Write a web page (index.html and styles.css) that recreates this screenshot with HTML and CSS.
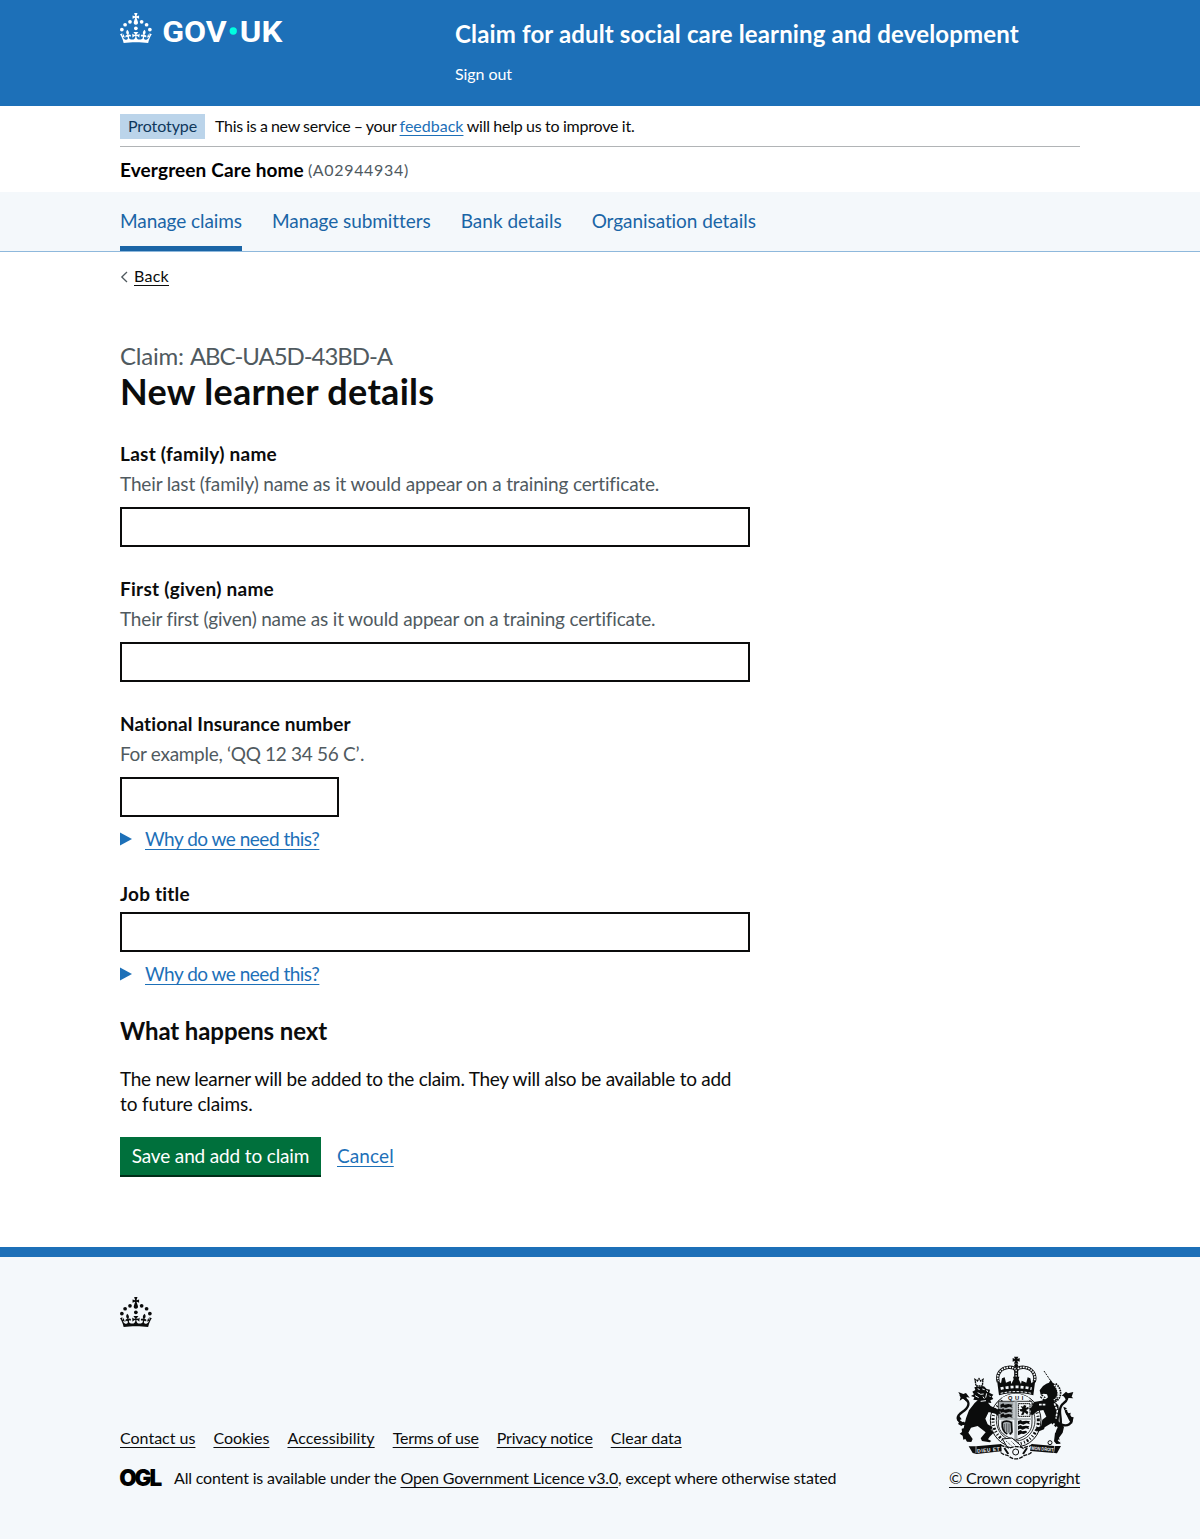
FILE: index.html
```html
<!DOCTYPE html>
<html lang="en">
<head>
<meta charset="utf-8">
<title>New learner details</title>
<link rel="stylesheet" href="styles.css">
</head>
<body>
<svg class="defs" width="0" height="0" aria-hidden="true">
  <defs>
    <g id="crown">
      <circle cx="20" cy="17.6" r="3.7"/><circle cx="10.2" cy="23.5" r="3.7"/><circle cx="3.7" cy="33.2" r="3.7"/><circle cx="31.7" cy="30.6" r="3.7"/><circle cx="43.3" cy="17.6" r="3.7"/><circle cx="53.2" cy="23.5" r="3.7"/><circle cx="59.7" cy="33.2" r="3.7"/>
      <path d="M33.1,9.8c.2-.1.3-.3.5-.5l4.6,2.4v-6.8l-4.6,1.5c-.1-.2-.3-.3-.5-.5l1.9-5.9h-6.7l1.9,5.9c-.2.1-.3.3-.5.5l-4.6-1.5v6.8l4.6-2.4c.1.2.3.3.5.5l-2.6,8c-.9,2.8,1.2,5.7,4.1,5.7h0c3,0,5.1-2.9,4.1-5.7l-2.6-8ZM37,37.9s-3.4,3.8-4.1,6.1c2.2,0,4.2-.5,6.4-2.8l-.7,8.5c-2-2.8-4.4-4.1-5.7-3.8.1,3.1.5,6.7,5.8,7.2,3.7.3,6.7-1.5,7-3.8.4-2.6-2-4.3-3.7-1.6-1.4-4.5,2.4-6.1,4.9-3.2-1.9-4.5-1.8-7.7,2.4-10.9,3,4,2.6,7.3-1.2,11.1,2.4-1.3,6.2,0,4,4.6-1.2-2.8-3.7-2.2-4.2.2-.3,1.7.7,3.7,3,4.2,1.9.3,4.7-.9,7-5.9-1.3,0-2.4.7-3.9,1.7l2.4-8c.6,2.3,1.4,3.7,2.2,4.5.6-1.6.5-2.8,0-5.3l5,1.8c-2.6,3.6-5.2,8.7-7.3,17.5-7.4-1.1-15.7-1.7-24.5-1.7h0c-8.8,0-17.1.6-24.5,1.7-2.1-8.9-4.7-13.9-7.3-17.5l5-1.8c-.5,2.5-.6,3.7,0,5.3.8-.8,1.6-2.3,2.2-4.5l2.4,8c-1.5-1-2.6-1.7-3.9-1.7,2.3,5,5.2,6.2,7,5.9,2.3-.4,3.3-2.4,3-4.2-.5-2.4-3-3.1-4.2-.2-2.2-4.6,1.6-6,4-4.6-3.7-3.7-4.2-7.1-1.2-11.1,4.2,3.2,4.3,6.4,2.4,10.9,2.5-2.8,6.3-1.3,4.9,3.2-1.8-2.7-4.1-1-3.7,1.6.3,2.3,3.3,4.1,7,3.8,5.4-.5,5.7-4.2,5.8-7.2-1.3-.2-3.7,1-5.7,3.8l-.7-8.5c2.2,2.3,4.2,2.7,6.4,2.8-.7-2.3-4.1-6.1-4.1-6.1h10.6Z"/>
    </g>
  </defs>
</svg>

<header class="header">
  <div class="container header-row">
    <div class="header-logo">
      <svg width="164" height="30" viewBox="0 0 328 60" fill="#fff" aria-label="GOV.UK">
        <use href="#crown"/>
        <text class="logo-text" x="84.500" y="57.500" textLength="129" lengthAdjust="spacingAndGlyphs">GOV</text>
        <circle class="logo-dot" cx="226.500" cy="36" r="7.300"/>
        <text class="logo-text" x="239.500" y="57.500" textLength="85" lengthAdjust="spacingAndGlyphs">UK</text>
      </svg>
    </div>
    <div class="header-content">
      <a class="service-name" href="#">Claim for adult social care learning and development</a>
      <a class="sign-out" href="#">Sign out</a>
    </div>
  </div>
</header>

<div class="container">
  <div class="phase">
    <strong class="tag">Prototype</strong>
    <span class="phase-text"><span class="phase-lead">This is a new service – your </span><a class="link feedback" href="#">feedback</a> will help us to improve it.</span>
  </div>
  <div class="org"><strong class="org-name">Evergreen Care home</strong><span class="org-code">(A02944934)</span></div>
</div>

<nav class="nav">
  <ul class="container nav-list">
    <li class="nav-item current"><a href="#">Manage claims</a></li>
    <li class="nav-item"><a href="#">Manage submitters</a></li>
    <li class="nav-item bank"><a href="#">Bank details</a></li>
    <li class="nav-item"><a href="#">Organisation details</a></li>
  </ul>
</nav>

<div class="container page">
  <a class="back" href="#"><svg class="chevron" width="8" height="12" viewBox="0 0 8 12"><path d="M7 1 1.800 6 7 11" fill="none" stroke="#505a5f" stroke-width="1.300"/></svg><span>Back</span></a>
  <main class="main">
    <span class="caption">Claim: <span class="reference">ABC-UA5D-43BD-A</span></span>
    <h1 class="title">New learner details</h1>
    <div class="group">
      <label class="label short" for="last">Last (family) name</label>
      <div class="hint">Their last (family) name as it would appear on a training certificate.</div>
      <input class="input" id="last" type="text">
    </div>
    <div class="group">
      <label class="label short" for="first">First (given) name</label>
      <div class="hint given">Their first (given) name as it would appear on a training certificate.</div>
      <input class="input" id="first" type="text">
    </div>
    <div class="group">
      <label class="label" for="nino">National Insurance number</label>
      <div class="hint example">For example, ‘QQ 12 34 56 C<span class="quote">’</span>.</div>
      <input class="input input-10" id="nino" type="text">
      <div class="details"><svg class="arrow" width="12" height="14" viewBox="0 0 12 14"><path d="M0 .5 12 7 0 13.500z"/></svg><a class="link why" href="#">Why do we need this?</a></div>
    </div>
    <div class="group">
      <label class="label job" for="job">Job title</label>
      <input class="input" id="job" type="text">
      <div class="details"><svg class="arrow" width="12" height="14" viewBox="0 0 12 14"><path d="M0 .5 12 7 0 13.500z"/></svg><a class="link why" href="#">Why do we need this?</a></div>
    </div>
    <h2 class="subtitle">What happens next</h2>
    <p class="body">The new learner will be added to the claim. They will also be available to add<br><span class="body-end">to future claims.</span></p>
    <div class="buttons">
      <button class="button" type="button">Save and add to claim</button>
      <a class="link cancel" href="#">Cancel</a>
    </div>
  </main>
</div>

<footer class="footer">
  <div class="container">
    <svg class="footer-crown" width="32" height="30" viewBox="0 0 64 60" fill="#0b0c0c"><use href="#crown"/></svg>
    <div class="footer-row">
      <div class="footer-meta">
        <ul class="footer-links">
          <li><a href="#">Contact us</a></li>
          <li><a href="#">Cookies</a></li>
          <li class="wide"><a href="#">Accessibility</a></li>
          <li class="tight"><a href="#">Terms of use</a></li>
          <li class="privacy"><a href="#">Privacy notice</a></li>
          <li><a href="#">Clear data</a></li>
        </ul>
        <div class="licence">
          <svg class="ogl" width="42" height="18" viewBox="0 0 42 18" aria-label="OGL"><text class="ogl-text" x="-0.800" y="17">O</text><text class="ogl-text" x="14.500" y="17">G</text><text class="ogl-text" x="29.500" y="17">L</text></svg>
          <span class="licence-text">All content is available under the <a href="#">Open Government Licence v3.0</a>, except where otherwise stated</span>
        </div>
      </div>
      <div class="copyright">
        <svg class="arms" width="118" height="103" viewBox="50 34 354 309" fill="#0b0c0c">
          <!-- crown -->
          <path d="M221 36h13l-3 7 7-3v11l-7-3 3 9h-13l3-9-7 3V40l7 3z"/>
          <circle cx="227.500" cy="63" r="6"/>
          <path d="M174 112c-8-24 8-42 30-44 12-1 20 3 23.500 10 3.500-7 12-11 24-10 22 2 38 20 30 44" fill="none" stroke="#0b0c0c" stroke-width="10"/>
          <path d="M174 112c-8-24 8-42 30-44 12-1 20 3 23.500 10 3.500-7 12-11 24-10 22 2 38 20 30 44" fill="none" stroke="#f4f8fb" stroke-width="5" stroke-dasharray="5 3"/>
          <path d="M227.500 74v30" stroke="#0b0c0c" stroke-width="12"/>
          <path d="M227.500 76v26" stroke="#f4f8fb" stroke-width="4" stroke-dasharray="4 4"/>
          <path d="m170 106 12 10 3-15 8-3 4 16 14-6 2 10 7-14-2-8h19l-2 8 7 14 2-10 14 6 4-16 8 3 3 15 12-10-6 46c-32-9-71-9-103 0z"/>
          <path d="M181 132c30-7 63-7 93 0" fill="none" stroke="#f4f8fb" stroke-width="8" stroke-dasharray="9 6"/>
          <path d="M181 146c30-7 63-7 93 0" fill="none" stroke="#f4f8fb" stroke-width="3" stroke-dasharray="8 4"/>
          <!-- garter and shield -->
          <ellipse cx="226" cy="227" rx="76" ry="80" fill="#f4f8fb" stroke="#0b0c0c" stroke-width="3"/>
          <ellipse cx="226" cy="227" rx="68" ry="71" fill="none" stroke="#0b0c0c" stroke-width="9" stroke-dasharray="3 5 6 6 3 7"/>
          <ellipse cx="226" cy="227" rx="58" ry="62" fill="#f4f8fb" stroke="#0b0c0c" stroke-width="2.500"/>
          <path d="M190 168c23-14 49-14 72 0" fill="none" stroke="#f4f8fb" stroke-width="20"/>
          <path d="M174 170h101v65c0 28-21 42-50 51-30-9-51-23-51-51z" fill="#f4f8fb" stroke="#0b0c0c" stroke-width="2.500"/>
          <path d="M176 172h44v50h-44z" fill="#a4aaad"/>
          <path d="m180 180 9-4 3 4 12-2 13 2-4 4 4 5-10-3-10 4-9-3-7 3zM180 195l9-4 3 4 12-2 13 2-4 4 4 5-10-3-10 4-9-3-7 3zM180 210l9-4 3 4 12-2 13 2-4 4 4 5-10-3-10 4-9-3-7 3z"/>
          <path d="M234 177h35v38h-35z" fill="none" stroke="#0b0c0c" stroke-width="3" stroke-dasharray="5 1"/>
          <path d="m241 184 7 2 3-5 7 2-2 7 8-4 1 7-8 3 7 6-3 8-8-7-4 8-7-1 5-9-7-1-3-6 9-1z"/>
          <path d="M182 228h35l-1 42c-20-5-33-18-34-42z" fill="#a4aaad"/>
          <path d="M186 234c5-6 20-6 27 0l2 28-7 7M186 234c-2 16 3 28 15 34" fill="none" stroke="#0b0c0c" stroke-width="5"/>
          <path d="M192 238v20M199 236v27M206 237v27" stroke="#0b0c0c" stroke-width="1.500"/>
          <path d="m233 229 9-3 3 4 12-2 12 2-3 4 3 5-10-3-10 4-9-3-7 3zM233 244l9-3 3 4 12-2 10 2-3 4 3 5-10-3-10 4-8-3-6 3zM233 259l9-3 3 4 12-2 4 5-10 5-8-1-10 5z"/>
          <path d="M222 170h9v113h-9zM174 221h101v4H174z" fill="#a4aaad"/>
          <path d="m186 283 29-3 28 24-13 10-30-8z" fill="#f4f8fb" stroke="#0b0c0c" stroke-width="3"/>
          <path d="m198 290 15 13M214 291l12 12" stroke="#0b0c0c" stroke-width="3" stroke-dasharray="3 3"/>
          <text class="motto" x="203" y="167" textLength="46">QUI</text>
          <!-- lion -->
          <path d="m104 104 7 5 5-7 5 7 7-5-2 20h-19z" fill="none" stroke="#0b0c0c" stroke-width="4" stroke-dasharray="6 1.500"/>
          <path d="m106 127 25-2 8 8 10 2-2 9 12 6-5 6 5 7-9 4 3 8-10-1 8 10 20 10 9-2 4 7-7 2 5 7-8-1-2 6-7-6-20-5-10 20 7 17 15 9-6 6 9 10-12 12-5 8 10 5-5 4-23-4-4-8 15-18-24-19-20 5-8 15 13 19-4 9-13-1-5-8-6 2-2-12-9-6 7-5-1-10 6-1 7-30 9-24 17-22 9-8-13-2 3-7-10-4 9-5-5-8 9-5-3-8z"/>
          <path d="m112 132 6 3M126 133l7 2M112 144l9 5 9-1M139 146l-3 13M104 153l11 6M121 170l16-2M139 136l3 6M147 153l4 4M128 156l4 6" stroke="#f4f8fb" stroke-width="3"/>
          <path d="M74 239c-31-11-25-25-8-37 20-14 23-27 12-37-6-6-14-7-18-14M73 233l-10 7-8-5" fill="none" stroke="#0b0c0c" stroke-width="7"/>
          <path d="m54 142 15 6 8-3 11 14-9-2-2 13-8-9-11 7 3-12zM53 208l-2 20 13-4z"/>
          <!-- unicorn -->
          <path d="m311 79 21 31" stroke="#0b0c0c" stroke-width="3" stroke-dasharray="6 3"/>
          <path d="m298 137 10-13 10-7 8-3 5-9 6 9 8 5 4 14 5 16-3 16-14 9-18 3-6-10 10-9-3-9-10-2-9 3z"/>
          <path d="M346 117c12 9 17 23 14 35-2 9-8 15-16 19" fill="none" stroke="#0b0c0c" stroke-width="5" stroke-dasharray="5 2.500"/>
          <path d="M341 121c10 9 14 20 11 31-2 7-6 11-12 14" fill="none" stroke="#f4f8fb" stroke-width="3.500" stroke-dasharray="5 2"/>
          <path d="M300 156c10 12 24 16 41 13M303 150l12 9" fill="none" stroke="#0b0c0c" stroke-width="4" stroke-dasharray="7 3"/>
          <path d="m281 172 22-4 17-6 20 6 14 14 3 22-2 26 16 17-4 17-11 15 5 18-13 1-7-8 3-25 6-14-17-15-20 12-2 6-15 6-13-3 4-6 15-6 4-20 12-9-9-20-17 3-15 12-8-2 3-10-6-7 8-4z"/>
          <path d="M296 180h19M342 176l9 22-4 24M342 236l-12 24-3 27M350 246l-7 17M354 285l8 10" fill="none" stroke="#f4f8fb" stroke-width="5" stroke-dasharray="8 3"/>
          <circle cx="329" cy="294" r="6" fill="none" stroke="#0b0c0c" stroke-width="3"/>
          <path d="M360 246c6-23-6-41 1-59 5-14 16-12 19-24l-7-10M363 239c19 9 35-4 29-18-4-11-18-14-15-26" fill="none" stroke="#0b0c0c" stroke-width="7"/>
          <path d="m364 153 13-12 6 5 16-4-5 14 5 5-14-1-7 8-3-12zM377 208l14-4-2 12 11 2-5 20-8-10zM369 186l11 5-8 6z"/>
          <!-- compartment and motto scroll -->
          <path d="M181 301c10 7 18 3 25 10 14-7 30-7 43 0 7-7 15-3 25-10l-2 23c-9 9-19 4-25 12-14 9-28 9-40 0-6-8-17-3-25-12z" fill="#f4f8fb" stroke="#0b0c0c" stroke-width="4" stroke-dasharray="12 3"/>
          <path d="m192 310 12 18M260 310l-12 18" stroke="#0b0c0c" stroke-width="6"/>
          <circle cx="226" cy="322" r="9" fill="none" stroke="#0b0c0c" stroke-width="3"/>
          <path d="m85 305 22 0 76-7-1 22-73 8-12-3zM274 298l69 6 19 0-12 22-80-7z"/>
          <path d="M107 305v20M343 304l-3 20" stroke="#f4f8fb" stroke-width="2"/>
          <text class="motto scroll" transform="rotate(-5 111 324)" x="111" y="324" textLength="68">DIEU ET</text>
          <text class="motto scroll" transform="rotate(5 273 316)" x="273" y="315" textLength="66" lengthAdjust="spacingAndGlyphs">MON DROIT</text>
        </svg>
        <a class="crown-link" href="#">© Crown copyright</a>
      </div>
    </div>
  </div>
</footer>
</body>
</html>
```

FILE: styles.css
```css
* { box-sizing: border-box; }
body {
  margin: 0;
  background: #fff;
  color: #0b0c0c;
  font: 400 19px/25px Lato, "Noto Sans", sans-serif;
  font-variant-ligatures: none;
}
a { color: inherit; }
ul { list-style: none; margin: 0; padding: 0; }
svg { overflow: visible; }
.defs { display: block; }
.container { width: 960px; margin: 0 auto; }
a, .back span {
  text-decoration-thickness: 1px;
  text-underline-offset: 3px;
  text-decoration-skip-ink: none;
}

/* Header */
.header { background: #1d70b8; color: #fff; height: 106px; }
.header-row { display: flex; }
.header-logo { width: 335px; padding-top: 13px; }
.header-logo svg { display: block; }
.logo-text { font: 700 60px Roboto, sans-serif; }
.logo-dot { fill: #00ffe0; }
.header-content { display: flex; flex-direction: column; padding-top: 19px; }
.header-content a { text-decoration: none; }
.service-name { font-size: 24px; line-height: 30px; font-weight: 700; letter-spacing: 0.15px; }
.sign-out { margin-top: 15px; font-size: 16px; line-height: 20px; letter-spacing: -0.065px; }

/* Phase banner and organisation */
.phase {
  display: flex;
  height: 41px;
  padding-top: 8px;
  border-bottom: 1px solid #b1b4b6;
  font-size: 16px;
  line-height: 23px;
}
.tag { height: 25px; width: 85px; margin-right: 10px; padding-left: 8px; background: #bbd4ea; color: #0f385c; font-weight: 400; letter-spacing: -0.1px; }
.phase-text { letter-spacing: -0.2px; word-spacing: -0.4px; }
.phase-lead { letter-spacing: -0.27px; word-spacing: -0.45px; }
.feedback { letter-spacing: 0; }
.link { color: #1d70b8; }
.org { display: flex; gap: 4px; height: 45px; padding-top: 10px; }
.org-name { letter-spacing: 0.13px; color: #000; }
.org-code { font-size: 16px; color: #505a5f; letter-spacing: 0.67px; }

/* Service navigation */
.nav { height: 60px; background: #f4f8fb; border-bottom: 1px solid #8eb8dc; }
.nav-list { display: flex; gap: 30px; }
.nav-item { height: 59px; padding-top: 16px; color: #1a65a6; letter-spacing: -0.068px; }
.nav-item a { text-decoration: none; }
.nav-item.current { border-bottom: 5px solid #1a65a6; }
.nav-item.bank { letter-spacing: 0.015px; }

/* Page body */
.page { height: 995px; padding-top: 15px; }
.back { display: flex; align-items: center; gap: 6px; width: 60px; height: 20px; font-size: 16px; line-height: 20px; text-decoration: none; }
.back span { margin-top: -2px; text-decoration-line: underline; letter-spacing: 0.266px; }
.main { width: 630px; padding-top: 54px; }
.caption { display: block; font-size: 24px; line-height: 30px; color: #505a5f; letter-spacing: -0.2px; }
.reference { letter-spacing: -1.07px; }
.title { margin: 0 0 30px; font-size: 36px; line-height: 40px; font-weight: 700; letter-spacing: 0.29px; }
.group { display: flex; flex-direction: column; align-items: flex-start; margin-bottom: 30px; }
.label { margin-bottom: 5px; font-weight: 700; letter-spacing: 0.1px; }
.label.short { letter-spacing: 0.265px; }
.label.job { margin-top: -1px; margin-bottom: 6px; letter-spacing: 0.2px; }
.hint { margin-bottom: 11px; color: #505a5f; letter-spacing: -0.15px; }
.hint + .input { margin-bottom: -1px; }
.hint.given { letter-spacing: -0.185px; }
.hint.example { letter-spacing: -0.3px; }
.quote { letter-spacing: 0.5px; }
.input { display: block; width: 100%; height: 40px; border: 2px solid #0b0c0c; border-radius: 0; background: #fff; }
.input-10 { width: 219px; }
.details { display: flex; gap: 13px; margin-top: 10px; }
.arrow { margin-top: 6px; fill: #1d70b8; }
.group:has(.job) .details { margin-top: 9px; }
.group:has(.job) { padding-top: 1px; margin-bottom: 30px; }
.why { letter-spacing: -0.5px; }
.subtitle { margin: 0 0 20px; font-size: 24px; line-height: 30px; font-weight: 700; letter-spacing: -0.1px; }
.body { margin: 0 0 21px; letter-spacing: -0.275px; white-space: nowrap; }
.body-end { letter-spacing: -0.11px; }
.buttons { display: flex; align-items: flex-start; gap: 16px; }
.button {
  width: 201px;
  height: 40px;
  padding: 0 0 3px;
  border: 0;
  background: #00703c;
  box-shadow: inset 0 -2px 0 #002d18;
  color: #fff;
  font: inherit;
  letter-spacing: -0.147px;
}
.cancel { margin-top: 6px; letter-spacing: 0.1px; }

/* Footer */
.footer { height: 292px; padding-top: 40px; background: #f4f8fb; border-top: 10px solid #1d70b8; font-size: 16px; line-height: 20px; }
.footer-crown { display: block; }
.footer-row { display: flex; justify-content: space-between; align-items: flex-end; padding-top: 29px; }
.footer-links { display: flex; gap: 18px; margin-bottom: 20px; }
.footer-links .tight { letter-spacing: -0.21px; }
.footer-links .privacy { letter-spacing: -0.15px; }
.footer-links .wide { letter-spacing: 0.08px; }
.licence { display: flex; gap: 12px; }
.ogl { margin-top: 1px; }
.ogl-text { font: 900 22.5px Inter, sans-serif; }
.licence-text { letter-spacing: -0.165px; }
.copyright { display: flex; flex-direction: column; align-items: center; }
.arms { display: block; margin: 0 0 9px 2px; }
.crown-link { letter-spacing: -0.188px; }
.motto { font: 700 17px "Liberation Sans", sans-serif; }
.scroll { fill: #f4f8fb; font-size: 15px; }
```
